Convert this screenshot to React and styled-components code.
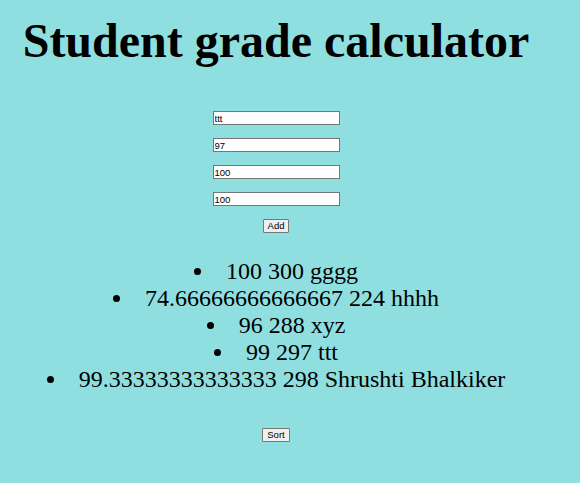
import React, { useState } from "react";
import styled, { createGlobalStyle } from "styled-components";

const GlobalStyle = createGlobalStyle`
  html, body {
    margin: 0;
    background: #8fdfe0;
  }
  body {
    font-family: "Liberation Serif", "Times New Roman", serif;
    color: #000;
  }
`;

const Page = styled.div`
  width: 552px;
  min-height: 483px;
  text-align: center;
`;

const Title = styled.h1`
  margin: 0;
  padding-top: 13px;
  font-size: 48px;
  font-weight: bold;
  line-height: normal;
`;

const Form = styled.div`
  display: flex;
  flex-direction: column;
  align-items: center;
  gap: 13px;
  margin-top: 43px;
`;

const Field = styled.input`
  box-sizing: border-box;
  width: 127px;
  height: 14px;
  padding: 0 1px;
  border: 1px solid #767676;
  border-radius: 0;
  background: #fff;
  font-family: "Liberation Sans", Arial, sans-serif;
  font-size: 9.5px;
  color: #000;
  outline: none;
`;

const Button = styled.button`
  box-sizing: border-box;
  height: 14px;
  padding: 0 4px;
  border: 1px solid #767676;
  border-radius: 1px;
  background: #efefef;
  font-family: "Liberation Sans", Arial, sans-serif;
  font-size: 9.5px;
  line-height: 1;
  color: #000;
`;

const List = styled.ul`
  margin: 25px 0 0;
  padding: 0;
  list-style: disc inside;
  font-size: 24px;
  line-height: 27px;
`;

const Item = styled.li``;

const Footer = styled.div`
  margin-top: 31px;
`;

const students = [
  ["100", "300", "gggg"],
  ["74.66666666666667", "224", "hhhh"],
  ["96", "288", "xyz"],
  ["99", "297", "ttt"],
  ["99.33333333333333", "298", "Shrushti Bhalkiker"],
];

export default function App() {
  const [name, setName] = useState("ttt");
  const [m1, setM1] = useState("97");
  const [m2, setM2] = useState("100");
  const [m3, setM3] = useState("100");

  return (
    <Page>
      <GlobalStyle />
      <Title>Student grade calculator</Title>
      <Form>
        <Field value={name} onChange={(e) => setName(e.target.value)} />
        <Field value={m1} onChange={(e) => setM1(e.target.value)} />
        <Field value={m2} onChange={(e) => setM2(e.target.value)} />
        <Field value={m3} onChange={(e) => setM3(e.target.value)} />
        <Button>Add</Button>
      </Form>
      <List>
        {students.map((s, i) => (
          <Item key={i}>{s.join(" ")}</Item>
        ))}
      </List>
      <Footer>
        <Button>Sort</Button>
      </Footer>
    </Page>
  );
}
